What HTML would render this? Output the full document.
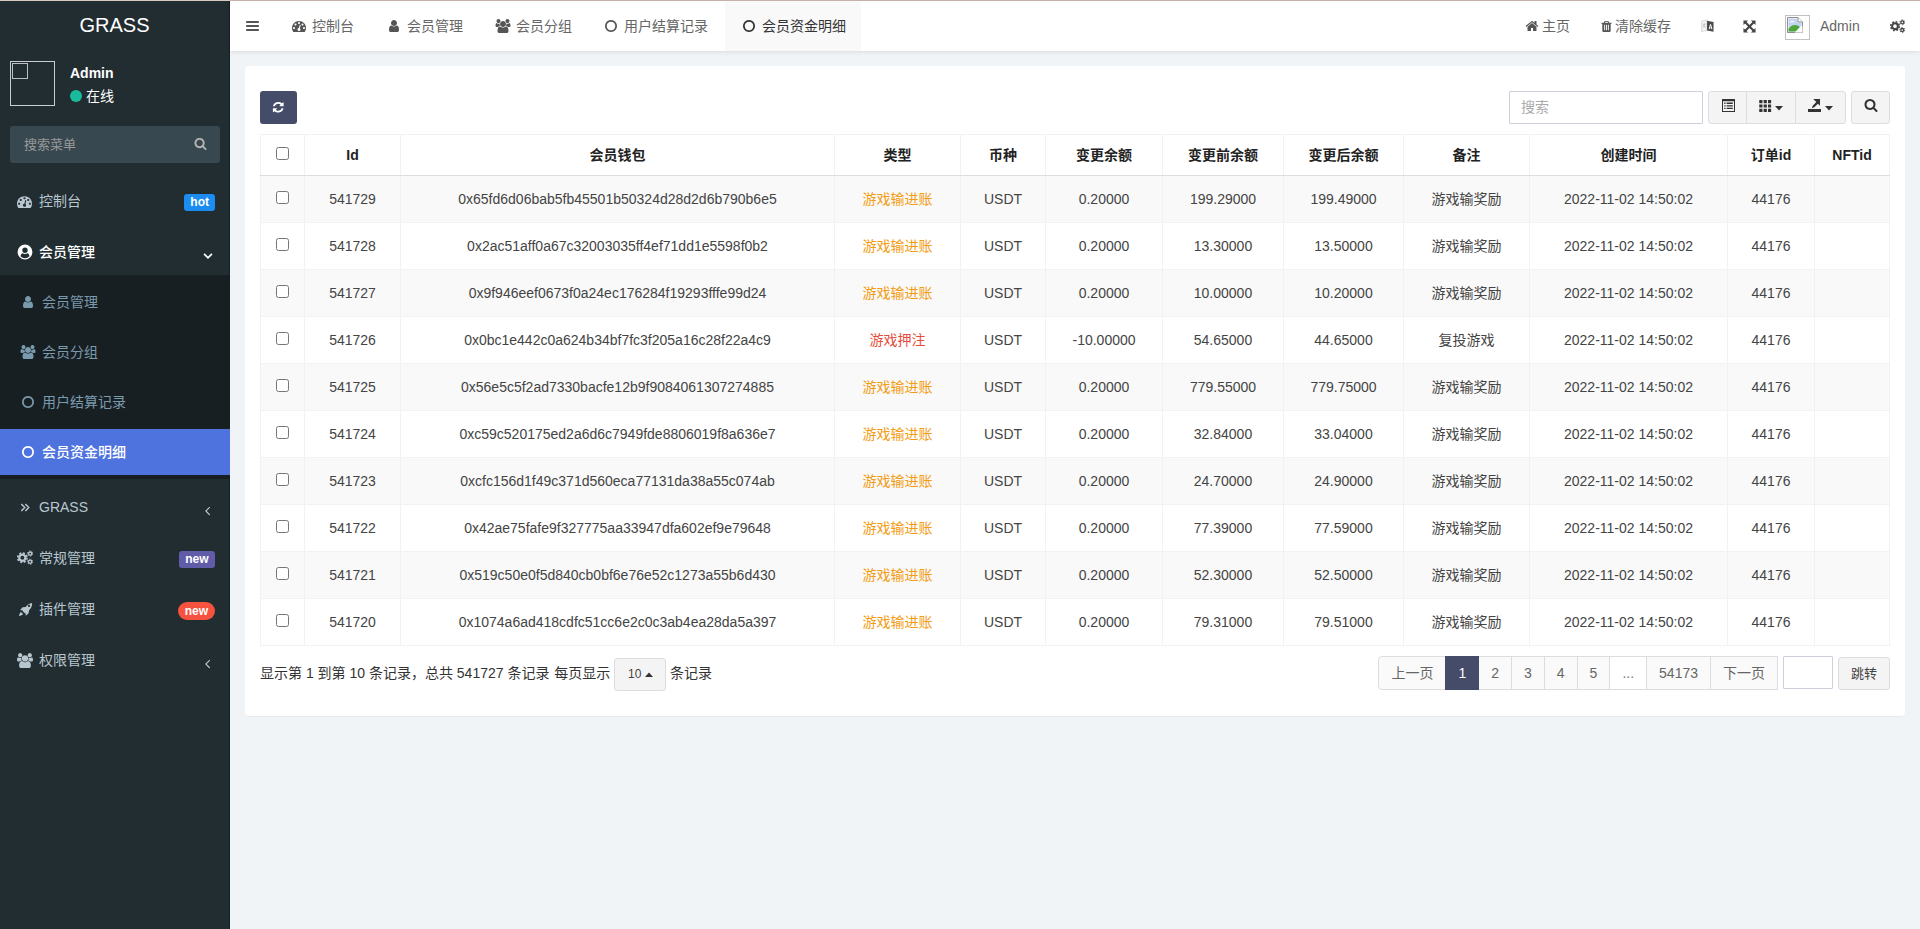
<!DOCTYPE html>
<html lang="zh-CN">
<head>
<meta charset="utf-8">
<title>GRASS</title>
<style>
*{box-sizing:border-box;margin:0;padding:0}
html,body{width:1920px;height:929px;overflow:hidden}
body{font-family:"Liberation Sans","Noto Sans CJK SC",sans-serif;font-size:14px;color:#333;background:#f1f4f6;position:relative;line-height:20px}
svg{display:block}
.abs{position:absolute}
svg.i{position:absolute;fill:currentColor;overflow:visible}
/* top line */
#topline{position:absolute;left:0;top:0;width:1920px;height:1px;background:#c5b1aa;z-index:50}
#topline i{display:block;width:230px;height:1px;background:#d9c9c3}
/* sidebar */
#side{position:absolute;left:0;top:1px;width:230px;height:928px;background:#222d32;box-shadow:inset -1px 0 0 #172026}
#logo{position:absolute;left:0;top:0;width:229px;height:50px;line-height:49px;text-align:center;color:#fff;font-size:20px}
#avatar{position:absolute;left:10px;top:60px;width:45px;height:45px;border:1px solid #c8cdd0}
#avatar i{position:absolute;left:1px;top:1px;width:16px;height:16px;border:1px solid #b9bfc3}
#uname{position:absolute;left:70px;top:62px;color:#fff;font-weight:bold;font-size:14px}
#ustat{position:absolute;left:70px;top:85px;color:#fff;font-size:14px}
#ustat b{display:inline-block;width:12px;height:12px;border-radius:50%;background:#18bc9c;margin-right:4px;vertical-align:-1px}
#msearch{position:absolute;left:10px;top:125px;width:210px;height:37px;background:#374850;border-radius:3px;color:#999;font-size:13px;line-height:37px;padding-left:14px}
.mi{position:absolute;left:0;width:230px;height:51px;color:#b8c7ce;font-size:14px;line-height:51px}
.mi .ic{position:absolute;left:17px;top:18px;width:16px;height:16px}
.mi .tx{position:absolute;left:39px;top:0}
.mi.on{color:#fff}
.mi.on .tx{font-weight:500}
.badge{position:absolute;right:15px;top:18px;height:17px;line-height:17px;padding:0 6px;color:#fff;font-weight:bold;font-size:12px;border-radius:3px}
#sub{position:absolute;left:0;top:274px;width:230px;height:204px;background:#181f23}
.si{position:absolute;left:0;width:230px;height:46px;color:#7a9aad;font-size:14px;line-height:46px}
.si .tx{position:absolute;left:42px;top:0}
.si .ic{position:absolute;left:21px;top:16px;width:14px;height:14px}
.si.on{background:#4e73df;color:#fff}
.si.on .tx{font-weight:500}
/* header */
#head{position:absolute;left:230px;top:1px;width:1690px;height:50px;background:#fff;box-shadow:0 1px 4px rgba(0,21,41,.10)}
.tab{position:absolute;top:0;height:50px;line-height:50px;font-size:14px;color:#666;white-space:nowrap}
.tab.on{background:#f9f9f9;color:#333}
.tab svg{position:absolute}
#hav{position:absolute;left:1555px;top:14px;width:25px;height:25px;border:1px solid #c2c2c2;background:#fff}
/* panel */
#panel{position:absolute;left:245px;top:66px;width:1660px;height:650px;background:#fff;border-radius:4px;box-shadow:0 1px 1px rgba(0,0,0,.04)}
#refresh{position:absolute;left:260px;top:91px;width:37px;height:33px;background:#444c69;border-radius:3px}
#search{position:absolute;left:1509px;top:91px;width:194px;height:33px;border:1px solid #ccd0dc;border-radius:1px;background:#fff;color:#aaa;line-height:31px;padding-left:11px;font-size:14px}
.tbtn{position:absolute;top:91px;height:33px;background:#f4f4f4;border:1px solid #ddd}
/* table */
#tbl{position:absolute;left:260px;top:134px;width:1629px;border-collapse:collapse;table-layout:fixed;font-size:14px}
#tbl th,#tbl td{border:1px solid #f2f2f2;text-align:center;vertical-align:middle;padding:0;white-space:nowrap;overflow:hidden}
#tbl th{height:41px;font-weight:bold;color:#222;border-bottom:1px solid #ddd}
#tbl td{height:47px;color:#444}
#tbl td.wn{color:#f39c12}
#tbl td.dn{color:#e74c3c}
#tbl tr.odd td{background:#f9f9f9}
.cb{display:inline-block;width:13px;height:13px;border:1px solid #767676;border-radius:2.5px;background:#fff;vertical-align:middle;position:relative;top:-3px}
.wn{color:#f39c12}
.dn{color:#e74c3c}
/* pagination */
#info{position:absolute;left:260px;top:663px;font-size:14px;color:#333;white-space:nowrap}
#psz{position:absolute;left:614px;top:658px;width:52px;height:33px;line-height:31px;border:1px solid #ddd;background:#f4f4f4;border-radius:3px;font-size:12px;color:#444;padding-left:13px}
#info2{position:absolute;left:670px;top:663px;font-size:14px;color:#333;white-space:nowrap}
#pager{position:absolute;right:142px;top:656px;list-style:none;white-space:nowrap;font-size:0}
#pager li{display:inline-block;height:34px;line-height:32px;padding:0 12px;border:1px solid #ddd;background:#fafafa;color:#666;font-size:14px;margin-left:-1px;vertical-align:top}
#pager li.f{border-radius:4px 0 0 4px;margin-left:0}
#pager li.on{background:#444c69;border-color:#444c69;color:#fff;position:relative;z-index:2}
#pager li.dis{background:#fff;color:#777}
#jump{position:absolute;left:1783px;top:656px;width:50px;height:33px;border:1px solid #ccd0dc;background:#fff;border-radius:1px}
#go{position:absolute;left:1838px;top:657px;width:52px;height:33px;line-height:31px;border:1px solid #ddd;background:#f4f4f4;border-radius:3px;text-align:center;color:#444;font-size:13px}
</style>
</head>
<body>
<svg width="0" height="0" style="position:absolute">
<defs>
<symbol id="i-bars" viewBox="0 0 1792 1792" preserveAspectRatio="none"><path d="M1664 1344v128q0 26-19 45t-45 19H192q-26 0-45-19t-19-45v-128q0-26 19-45t45-19h1408q26 0 45 19t19 45zm0-512v128q0 26-19 45t-45 19H192q-26 0-45-19t-19-45V832q0-26 19-45t45-19h1408q26 0 45 19t19 45zm0-512v128q0 26-19 45t-45 19H192q-26 0-45-19t-19-45V320q0-26 19-45t45-19h1408q26 0 45 19t19 45z"/></symbol>
<symbol id="i-search" viewBox="0 0 1792 1792"><path d="M1216 832q0-185-131.500-316.500T768 384 451.500 515.500 320 832t131.500 316.500T768 1280t316.500-131.500T1216 832zm512 832q0 52-38 90t-90 38q-54 0-90-38l-343-342q-179 124-399 124-143 0-273.500-55.500t-225-150-150-225T64 832t55.500-273.500 150-225 225-150T768 128t273.500 55.500 225 150 150 225T1472 832q0 220-124 399l343 343q37 37 37 90z"/></symbol>
<symbol id="i-user" viewBox="0 0 1792 1792"><path d="M1536 1399q0 109-62.500 187T1323 1664H469q-88 0-150.500-78T256 1399q0-85 8.500-160.500t31.500-152 58.500-131 94-89T583 832q131 128 313 128t313-128q76 0 134.500 34.500t94 89 58.500 131 31.500 152 8.500 160.500zm-256-887q0 159-112.500 271.500T896 896 624.500 783.500 512 512t112.500-271.500T896 128t271.500 112.500T1280 512z"/></symbol>
<symbol id="i-circleo" viewBox="0 0 1792 1792"><path d="M896 352q-148 0-273 73T425 623t-73 273 73 273 198 198 273 73 273-73 198-198 73-273-73-273-198-198-273-73zm768 544q0 209-103 385.500T1281.500 1561 896 1664t-385.500-103T231 1281.500 128 896t103-385.500T510.500 231 896 128t385.500 103T1561 510.500 1664 896z"/></symbol>
<symbol id="i-angleleft" viewBox="0 0 1792 1792"><path d="M1203 544q0 13-10 23L800 960l393 393q10 10 10 23t-10 23l-50 50q-10 10-23 10t-23-10L631 983q-10-10-10-23t10-23l466-466q10-10 23-10t23 10l50 50q10 10 10 23z"/></symbol>
<symbol id="i-home" viewBox="0 0 1792 1792"><path d="M1472 992v480q0 26-19 45t-45 19h-384v-384H768v384H384q-26 0-45-19t-19-45V992q0-1 .5-3t.5-3l575-474 575 474q1 2 1 6zm223-69l-62 74q-8 9-21 11h-3q-13 0-21-7L896 424l-692 577q-12 8-24 7-13-2-21-11l-62-74q-8-10-7-23.500t11-21.500l719-599q32-26 76-26t76 26l244 204V288q0-14 9-23t23-9h192q14 0 23 9t9 23v408l219 182q10 8 11 21.500t-7 23.500z"/></symbol>
<symbol id="i-trash" viewBox="0 0 1792 1792"><path d="M704 1376V672q0-14-9-23t-23-9h-64q-14 0-23 9t-9 23v704q0 14 9 23t23 9h64q14 0 23-9t9-23zm256 0V672q0-14-9-23t-23-9h-64q-14 0-23 9t-9 23v704q0 14 9 23t23 9h64q14 0 23-9t9-23zm256 0V672q0-14-9-23t-23-9h-64q-14 0-23 9t-9 23v704q0 14 9 23t23 9h64q14 0 23-9t9-23zM672 384h448l-48-117q-7-9-17-11H738q-10 2-17 11zm928 32v64q0 14-9 23t-23 9h-96v948q0 83-47 143.500t-113 60.500H480q-66 0-113-58.500T320 1464V512h-96q-14 0-23-9t-9-23v-64q0-14 9-23t23-9h309l70-167q15-37 54-63t79-26h320q40 0 79 26t54 63l70 167h309q14 0 23 9t9 23z"/></symbol>
<symbol id="i-refresh" viewBox="0 0 1792 1792"><path d="M1639 1056q0 5-1 7-64 268-268 434.500T892 1664q-146 0-282.500-55T366 1452l-129 129q-19 19-45 19t-45-19-19-45v-448q0-26 19-45t45-19h448q26 0 45 19t19 45-19 45l-137 137q71 66 161 102t187 36q134 0 250-65t186-179q11-17 53-117 8-23 30-23h192q13 0 22.500 9.500t9.500 22.500zm25-800v448q0 26-19 45t-45 19h-448q-26 0-45-19t-19-45 19-45l138-138q-148-137-349-137-134 0-250 65T460 628q-11 17-53 117-8 23-30 23H178q-13 0-22.500-9.500T146 736v-7q65-268 270-434.500T896 128q146 0 284 55.500T1425 340l130-129q19-19 45-19t45 19 19 45z"/></symbol>
<symbol id="i-users" viewBox="0 0 1920 1792"><path d="M593 896q-162 5-265 128H194q-82 0-138-40.500T0 865q0-353 124-353 6 0 43.500 21t97.500 42.500T384 597q67 0 133-23-5 37-5 66 0 139 81 256zm1071 637q0 120-73 189.500t-194 69.500H523q-121 0-194-69.500T256 1533q0-53 3.500-103.500t14-109T300 1212t43-97.500 62-81 85.500-53.500T602 960q10 0 43 21.500t73 48 107 48 135 21.500 135-21.500 107-48 73-48 43-21.500q61 0 111.500 20t85.500 53.500 62 81 43 97.500 26.500 108.500 14 109 3.500 103.500zM640 256q0 106-75 181t-181 75-181-75-75-181 75-181T384 0t181 75 75 181zm704 384q0 159-112.500 271.500T960 1024 688.500 911.500 576 640t112.500-271.500T960 256t271.500 112.500T1344 640zm576 225q0 78-56 118.500t-138 40.500h-134q-103-123-265-128 81-117 81-256 0-29-5-66 66 23 133 23 59 0 119-21.500t97.500-42.500 43.500-21q124 0 124 353zm-128-609q0 106-75 181t-181 75-181-75-75-181 75-181 181-75 181 75 75 181z"/></symbol>
<symbol id="i-dash" viewBox="0 0 1792 1792"><path d="M384 1152q0-53-37.500-90.500T256 1024t-90.500 37.500T128 1152t37.500 90.500T256 1280t90.500-37.500T384 1152zm192-448q0-53-37.500-90.500T448 576t-90.500 37.500T320 704t37.500 90.500T448 832t90.500-37.500T576 704zm428 481l101-382q6-26-7.500-48.500T1059 724q-26-6-48.500 7.500T981 770l-101 382q-60 5-107 43.500t-63 98.500q-20 77 20 146t117 89 146-20 89-117q16-60-6-117t-72-91zm660-33q0-53-37.500-90.500T1536 1024t-90.500 37.500-37.500 90.500 37.500 90.500 90.500 37.500 90.500-37.500 37.500-90.500zm-640-640q0-53-37.500-90.500T896 384t-90.500 37.500T768 512t37.500 90.500T896 640t90.500-37.500T1024 512zm448 192q0-53-37.500-90.500T1344 576t-90.500 37.500T1216 704t37.500 90.500 90.500 37.500 90.500-37.500T1472 704zm320 448q0 261-141 483-19 29-54 29H195q-35 0-54-29Q0 1414 0 1152q0-182 71-348t191-286 286-191 348-71 348 71 286 191 191 286 71 348z"/></symbol>
<symbol id="i-usercircle" viewBox="0 0 16 16"><path fill-rule="evenodd" d="M8 .6a7.4 7.4 0 1 0 0 14.8A7.4 7.4 0 0 0 8 .6zM8 3.6a2.7 2.7 0 1 1 0 5.4 2.7 2.7 0 0 1 0-5.400zM3.500 12.200c.2-1.700 1-2.700 2.100-3 .7.500 1.500.8 2.400.8s1.700-.3 2.400-.8c1.100.3 1.900 1.300 2.100 3A5.900 5.900 0 0 1 8 14.300a5.900 5.900 0 0 1-4.500-2.100z"/></symbol>
<symbol id="i-cogs" viewBox="0 0 15 14"><g fill="none" stroke="currentColor"><circle cx="5" cy="7.200" r="2.900" stroke-width="2.100"/><circle cx="5" cy="7.200" r="4.400" stroke-width="1.500" stroke-dasharray="1.900 1.556"/><circle cx="12.300" cy="3.300" r="1.500" stroke-width="1.300"/><circle cx="12.300" cy="3.300" r="2.450" stroke-width="0.900" stroke-dasharray="1.300 1.266"/><circle cx="12.300" cy="11" r="1.500" stroke-width="1.300"/><circle cx="12.300" cy="11" r="2.450" stroke-width="0.900" stroke-dasharray="1.300 1.266"/></g></symbol>
<symbol id="i-rocket" viewBox="0 0 16 16"><path d="M15 1c.2 3.200-.9 5.800-3.200 7.900l-.5 3.200-2.900 2.600-.5-2.700-1-.3-1.600-1.600-.3-1-2.700-.5L4.900 5.700l3.200-.5C10.200 2.900 12.300 1.200 15 1zM11.800 3a1.200 1.200 0 1 0 0 2.400 1.200 1.200 0 0 0 0-2.400zM3.200 10.600l2.200 2.200c-.9 1.300-2.300 1.900-4.300 2.100.2-2 .8-3.400 2.100-4.300z" fill-rule="evenodd"/></symbol>
<symbol id="i-dblright" viewBox="0 0 16 16"><path d="M4.600 4.200l3.600 3.800-3.600 3.800M8.900 4.200l3.600 3.800-3.600 3.800" fill="none" stroke="currentColor" stroke-width="1.600"/></symbol>
<symbol id="i-angledown" viewBox="0 0 16 16"><path d="M3.500 5.500L8 10l4.500-4.500" fill="none" stroke="currentColor" stroke-width="1.900"/></symbol>
<symbol id="i-th" viewBox="0 0 13 13"><path d="M0 0h3.500v3.500H0zM4.750 0h3.500v3.500h-3.500zM9.500 0H13v3.500H9.500zM0 4.750h3.500v3.500H0zM4.750 4.750h3.500v3.500h-3.500zM9.500 4.750H13v3.500H9.500zM0 9.500h3.500V13H0zM4.750 9.500h3.500V13h-3.500zM9.500 9.500H13V13H9.500z"/></symbol>
<symbol id="i-listalt" viewBox="0 0 13 13"><path fill-rule="evenodd" d="M0 0h13v13H0zM1 2.200v9.800h11V2.200zM2.200 3.600h1.300v1.300H2.200zM4.600 3.600h6.200v1.300H4.600zM2.200 6.200h1.300v1.300H2.200zM4.600 6.200h6.200v1.300H4.600zM2.200 8.800h1.300v1.300H2.200zM4.600 8.800h6.200v1.300H4.600z"/></symbol>
<symbol id="i-export" viewBox="0 0 13 13"><path d="M0 10h13v3H0zM5.200 0H12v6.800L9.900 4.700 6.300 8.300l-2.500.9.900-2.500 3.600-3.600z"/></symbol>
<symbol id="i-arrowsalt" viewBox="0 0 14 14"><path d="M.5.500h5L3.800 2.200 7 5.400l3.200-3.200L8.500.5h5v5L11.800 3.800 8.600 7l3.200 3.200 1.700-1.700v5h-5l1.700-1.700L7 8.600l-3.200 3.200 1.700 1.700h-5v-5l1.700 1.700L5.400 7 2.200 3.800.5 5.500z"/></symbol>
<symbol id="i-lang" viewBox="0 0 14 14"><path d="M.6 1.700L6.500.5v11.300L.6 13z" fill="#f3f3f3" stroke="#c4c4c4" stroke-width=".6"/><path d="M2.200 5.200c1 .3 2 .2 2.800-.4M3.600 4.200c0 2-.5 3.500-1.700 4.500M2.600 6.500c.6 1 1.500 1.700 2.600 2" fill="none" stroke="#aaa" stroke-width=".7"/><path d="M6.500 1.300l7 1.300v10.600l-7-1.400z" fill="#4a4a4a"/><path d="M8.200 10.600l1.500-5.400h1.100l1.500 5.400h-1l-.3-1.200H9.500l-.3 1.200zm1.500-2.100h1.100l-.55-2.100z" fill="#fff"/></symbol>
<symbol id="i-broken" viewBox="0 0 16 16"><path d="M.5.500h10.500l4.500 4.500v10.500H.5z" fill="#fff" stroke="#8e8e8e"/><path d="M1.500 1.500h9v4h4v9h-13z" fill="#c3d3f2"/><path d="M11 .5v4.500h4.500" fill="#fff" stroke="#8e8e8e"/><path d="M3.500 4.800c.3-1 1.400-1.200 2-.6.900-.5 1.900 0 1.900 1H3c-.3 0 0-.5.500-.4z" fill="#fff"/><path d="M1.500 12c1.500-2.500 4-4 6.500-4 2 0 3.500.8 5 2.200L10 14.500H1.500z" fill="#4fa63a"/><path d="M9.500 15.500l6-6v6z" fill="#fff"/><path d="M15 9l-6.500 6.500" stroke="#fff" stroke-width="1.200"/></symbol>
<symbol id="i-caret" viewBox="0 0 8 5"><path d="M0 0h8L4 4.600z"/></symbol>
</defs></svg>
<div id="topline"><i></i></div>

<div id="side">
  <div id="logo">GRASS</div>
  <div id="avatar"><i></i></div>
  <div id="uname">Admin</div>
  <div id="ustat"><b></b>在线</div>
  <div id="msearch">搜索菜单<svg class="i" style="left:184px;top:11px;width:13px;height:13px;color:#b4b4b4;"><use href="#i-search"/></svg></div>
  <div class="mi" style="top:175px"><svg class="i" style="left:17px;top:18px;width:15px;height:15px;"><use href="#i-dash"/></svg><span class="tx">控制台</span><span class="badge" style="background:#1c8cf0">hot</span></div>
  <div class="mi on" style="top:226px"><svg class="i" style="left:17px;top:17px;width:16px;height:16px;"><use href="#i-usercircle"/></svg><span class="tx">会员管理</span><svg class="i" style="left:201px;top:22px;width:14px;height:14px;"><use href="#i-angledown"/></svg></div>
  <div id="sub">
    <div class="si" style="top:4px"><svg class="i" style="left:21px;top:16px;width:14px;height:14px;"><use href="#i-user"/></svg><span class="tx">会员管理</span></div>
    <div class="si" style="top:54px"><svg class="i" style="left:20px;top:16px;width:16px;height:14px;"><use href="#i-users"/></svg><span class="tx">会员分组</span></div>
    <div class="si" style="top:104px"><svg class="i" style="left:21px;top:16px;width:14px;height:14px;"><use href="#i-circleo"/></svg><span class="tx">用户结算记录</span></div>
    <div class="si on" style="top:154px"><svg class="i" style="left:21px;top:16px;width:14px;height:14px;"><use href="#i-circleo"/></svg><span class="tx">会员资金明细</span></div>
  </div>
  <div class="mi" style="top:481px"><svg class="i" style="left:17px;top:18px;width:15px;height:15px;"><use href="#i-dblright"/></svg><span class="tx">GRASS</span><svg class="i" style="left:200px;top:21px;width:15px;height:15px;"><use href="#i-angleleft"/></svg></div>
  <div class="mi" style="top:532px"><svg class="i" style="left:17px;top:17px;width:16px;height:15px;"><use href="#i-cogs"/></svg><span class="tx">常规管理</span><span class="badge" style="background:#605ca8;padding:0 6.500px">new</span></div>
  <div class="mi" style="top:583px"><svg class="i" style="left:18px;top:18px;width:15px;height:15px;"><use href="#i-rocket"/></svg><span class="tx">插件管理</span><span class="badge" style="background:#f5533f;border-radius:9px;height:18px;line-height:18px;padding:0 7px;top:18px">new</span></div>
  <div class="mi" style="top:634px"><svg class="i" style="left:17px;top:18px;width:16px;height:15px;"><use href="#i-users"/></svg><span class="tx">权限管理</span><svg class="i" style="left:200px;top:21px;width:15px;height:15px;"><use href="#i-angleleft"/></svg></div>
</div>

<div id="head">
  <svg class="i" style="left:15px;top:18px;width:15px;height:14px;color:#555;"><use href="#i-bars"/></svg>
  <div class="tab" style="left:82px"><svg class="i" style="left:-20px;top:18px;width:14px;height:14px;color:#555;"><use href="#i-dash"/></svg>控制台</div>
  <div class="tab" style="left:177px"><svg class="i" style="left:-20px;top:18px;width:14px;height:14px;color:#555;"><use href="#i-user"/></svg>会员管理</div>
  <div class="tab" style="left:286px"><svg class="i" style="left:-21px;top:18px;width:16px;height:14px;color:#555;"><use href="#i-users"/></svg>会员分组</div>
  <div class="tab" style="left:394px"><svg class="i" style="left:-20px;top:18px;width:14px;height:14px;color:#555;"><use href="#i-circleo"/></svg>用户结算记录</div>
  <div class="tab on" style="left:495px;width:136px"><svg class="i" style="left:17px;top:18px;width:14px;height:14px;color:#333;"><use href="#i-circleo"/></svg><span style="position:absolute;left:37px">会员资金明细</span></div>
  <div class="tab" style="left:1312px"><svg class="i" style="left:-17px;top:18px;width:14px;height:14px;color:#555;"><use href="#i-home"/></svg>主页</div>
  <div class="tab" style="left:1385px"><svg class="i" style="left:-15.500px;top:18.500px;width:13px;height:13px;color:#555;"><use href="#i-trash"/></svg>清除缓存</div>
  <svg class="i" style="left:1471px;top:18px;width:13px;height:14px;"><use href="#i-lang"/></svg>
  <svg class="i" style="left:1513px;top:18.500px;width:13px;height:13px;color:#444;"><use href="#i-arrowsalt"/></svg>
  <div id="hav"><svg class="i" style="left:1px;top:1px;width:16px;height:16px"><use href="#i-broken"/></svg></div>
  <div class="tab" style="left:1590px">Admin</div>
  <svg class="i" style="left:1660px;top:17.500px;width:15px;height:14px;color:#444;"><use href="#i-cogs"/></svg>
</div>

<div id="panel"></div>
<div id="refresh"><svg class="i" style="left:12px;top:9.500px;width:12.500px;height:12.500px;color:#fff;"><use href="#i-refresh"/></svg></div>
<div id="search">搜索</div>
<div class="tbtn" style="left:1708px;width:39px;border-radius:3px 0 0 3px"><svg class="i" style="left:12.500px;top:7px;width:13px;height:13px;color:#333;"><use href="#i-listalt"/></svg></div>
<div class="tbtn" style="left:1746px;width:50px"><svg class="i" style="left:11.500px;top:8px;width:12.500px;height:12px;color:#333;"><use href="#i-th"/></svg><svg class="i" style="left:28px;top:14px;width:8px;height:5px;color:#333;"><use href="#i-caret"/></svg></div>
<div class="tbtn" style="left:1795px;width:51px;border-radius:0 3px 3px 0"><svg class="i" style="left:12px;top:7px;width:13px;height:13px;color:#333;"><use href="#i-export"/></svg><svg class="i" style="left:29px;top:14px;width:8px;height:5px;color:#333;"><use href="#i-caret"/></svg></div>
<div class="tbtn" style="left:1851px;width:39px;border-radius:3px"><svg class="i" style="left:11.500px;top:6px;width:14px;height:14px;color:#333;"><use href="#i-search"/></svg></div>

<table id="tbl">
<colgroup><col style="width:44px"><col style="width:96px"><col style="width:434px"><col style="width:126px"><col style="width:85px"><col style="width:117px"><col style="width:121px"><col style="width:120px"><col style="width:126px"><col style="width:198px"><col style="width:87px"><col style="width:75px"></colgroup>
<thead><tr><th><span class="cb"></span></th><th>Id</th><th>会员钱包</th><th>类型</th><th>币种</th><th>变更余额</th><th>变更前余额</th><th>变更后余额</th><th>备注</th><th>创建时间</th><th>订单id</th><th>NFTid</th></tr></thead>
<tbody>
<tr class="odd"><td><span class="cb"></span></td><td>541729</td><td>0x65fd6d06bab5fb45501b50324d28d2d6b790b6e5</td><td class="wn">游戏输进账</td><td>USDT</td><td>0.20000</td><td>199.29000</td><td>199.49000</td><td>游戏输奖励</td><td>2022-11-02 14:50:02</td><td>44176</td><td></td></tr>
<tr><td><span class="cb"></span></td><td>541728</td><td>0x2ac51aff0a67c32003035ff4ef71dd1e5598f0b2</td><td class="wn">游戏输进账</td><td>USDT</td><td>0.20000</td><td>13.30000</td><td>13.50000</td><td>游戏输奖励</td><td>2022-11-02 14:50:02</td><td>44176</td><td></td></tr>
<tr class="odd"><td><span class="cb"></span></td><td>541727</td><td>0x9f946eef0673f0a24ec176284f19293fffe99d24</td><td class="wn">游戏输进账</td><td>USDT</td><td>0.20000</td><td>10.00000</td><td>10.20000</td><td>游戏输奖励</td><td>2022-11-02 14:50:02</td><td>44176</td><td></td></tr>
<tr><td><span class="cb"></span></td><td>541726</td><td>0x0bc1e442c0a624b34bf7fc3f205a16c28f22a4c9</td><td class="dn">游戏押注</td><td>USDT</td><td>-10.00000</td><td>54.65000</td><td>44.65000</td><td>复投游戏</td><td>2022-11-02 14:50:02</td><td>44176</td><td></td></tr>
<tr class="odd"><td><span class="cb"></span></td><td>541725</td><td>0x56e5c5f2ad7330bacfe12b9f9084061307274885</td><td class="wn">游戏输进账</td><td>USDT</td><td>0.20000</td><td>779.55000</td><td>779.75000</td><td>游戏输奖励</td><td>2022-11-02 14:50:02</td><td>44176</td><td></td></tr>
<tr><td><span class="cb"></span></td><td>541724</td><td>0xc59c520175ed2a6d6c7949fde8806019f8a636e7</td><td class="wn">游戏输进账</td><td>USDT</td><td>0.20000</td><td>32.84000</td><td>33.04000</td><td>游戏输奖励</td><td>2022-11-02 14:50:02</td><td>44176</td><td></td></tr>
<tr class="odd"><td><span class="cb"></span></td><td>541723</td><td>0xcfc156d1f49c371d560eca77131da38a55c074ab</td><td class="wn">游戏输进账</td><td>USDT</td><td>0.20000</td><td>24.70000</td><td>24.90000</td><td>游戏输奖励</td><td>2022-11-02 14:50:02</td><td>44176</td><td></td></tr>
<tr><td><span class="cb"></span></td><td>541722</td><td>0x42ae75fafe9f327775aa33947dfa602ef9e79648</td><td class="wn">游戏输进账</td><td>USDT</td><td>0.20000</td><td>77.39000</td><td>77.59000</td><td>游戏输奖励</td><td>2022-11-02 14:50:02</td><td>44176</td><td></td></tr>
<tr class="odd"><td><span class="cb"></span></td><td>541721</td><td>0x519c50e0f5d840cb0bf6e76e52c1273a55b6d430</td><td class="wn">游戏输进账</td><td>USDT</td><td>0.20000</td><td>52.30000</td><td>52.50000</td><td>游戏输奖励</td><td>2022-11-02 14:50:02</td><td>44176</td><td></td></tr>
<tr><td><span class="cb"></span></td><td>541720</td><td>0x1074a6ad418cdfc51cc6e2c0c3ab4ea28da5a397</td><td class="wn">游戏输进账</td><td>USDT</td><td>0.20000</td><td>79.31000</td><td>79.51000</td><td>游戏输奖励</td><td>2022-11-02 14:50:02</td><td>44176</td><td></td></tr>
</tbody>
</table>

<div id="info">显示第 1 到第 10 条记录，总共 541727 条记录<span style="margin-left:1px"> 每页显示</span></div>
<div id="psz">10<svg class="i" style="left:30px;top:13px;width:8px;height:5px;color:#333;transform:rotate(180deg)"><use href="#i-caret"/></svg></div>
<div id="info2">条记录</div>
<ul id="pager"><li class="f">上一页</li><li class="on">1</li><li>2</li><li>3</li><li>4</li><li>5</li><li class="dis">...</li><li>54173</li><li>下一页</li></ul>
<div id="jump"></div>
<div id="go">跳转</div>

</body>
</html>
